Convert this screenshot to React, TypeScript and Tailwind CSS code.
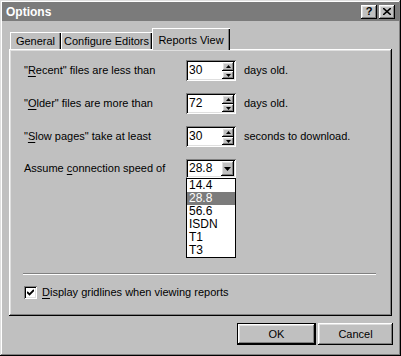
import React from 'react';

const raised =
  'bg-[#c0c0c0] shadow-[inset_-1px_-1px_0_#000,inset_1px_1px_0_#fff,inset_-2px_-2px_0_#808080,inset_2px_2px_0_#dfdfdf]';
const sunken =
  'bg-white shadow-[inset_1px_1px_0_#808080,inset_-1px_-1px_0_#fff,inset_2px_2px_0_#000,inset_-2px_-2px_0_#dfdfdf]';

function Tri({ up }: { up?: boolean }) {
  return (
    <svg width="5" height="3" viewBox="0 0 5 3" className="block">
      <polygon points={up ? '2.5,0 5,3 0,3' : '0,0 5,0 2.5,3'} fill="#000" />
    </svg>
  );
}

function SpinBox({ value }: { value: string }) {
  return (
    <div className={`flex h-[21px] w-[50px] p-[2px] ${sunken}`}>
      <div className="flex-1 pl-[1px] text-[12px] leading-[17px]">{value}</div>
      <div className="flex w-[12px] flex-col">
        <div className={`flex h-[9px] items-center justify-center ${raised}`}>
          <Tri up />
        </div>
        <div className={`flex h-[8px] items-center justify-center ${raised}`}>
          <Tri />
        </div>
      </div>
    </div>
  );
}

function Key({ children }: { children: React.ReactNode }) {
  return <span className="underline underline-offset-[2px]">{children}</span>;
}

const speeds = ['14.4', '28.8', '56.6', 'ISDN', 'T1', 'T3'];

export default function App() {
  return (
    <div
      className="flex h-[356px] w-[401px] flex-col bg-[#c0c0c0] p-[2px] text-[11px] text-black shadow-[inset_-1px_-1px_0_#000,inset_1px_1px_0_#dfdfdf,inset_-2px_-2px_0_#808080,inset_2px_2px_0_#fff]"
      style={{ fontFamily: '"Liberation Sans", Arial, sans-serif' }}
    >
      {/* title bar */}
      <div className="flex h-[19px] items-center bg-[#7b7b7b] pl-[4px] pr-[4px]">
        <span className="flex-1 text-[12px] font-bold text-white">Options</span>
        <div className="flex gap-[2px]">
          <div className={`flex h-[14px] w-[16px] items-center justify-center text-[11px] font-bold leading-none ${raised}`}>
            ?
          </div>
          <div className={`flex h-[14px] w-[16px] items-center justify-center ${raised}`}>
            <svg width="8" height="7" viewBox="0 0 8 7">
              <path d="M0 0 L8 7 M8 0 L0 7" stroke="#000" strokeWidth="1.6" />
            </svg>
          </div>
        </div>
      </div>

      {/* tabs */}
      <div className="mt-[8px] flex h-[20px] items-end whitespace-nowrap pl-[8px]">
        <div className="flex h-[17px] w-[51px] items-center justify-center pt-[1px] shadow-[inset_1px_1px_0_#fff,inset_-1px_0_0_#000,inset_-2px_0_0_#808080]">
          General
        </div>
        <div className="flex h-[17px] w-[91px] items-center justify-center pt-[1px] shadow-[inset_1px_1px_0_#fff,inset_-1px_0_0_#000,inset_-2px_0_0_#808080]">
          Configure Editors
        </div>
        <div className="relative z-10 -mb-[1px] flex h-[22px] w-[78px] items-start justify-center bg-[#c0c0c0] pt-[4px] shadow-[inset_1px_1px_0_#fff,inset_-1px_0_0_#000,inset_-2px_0_0_#808080]">
          Reports View
        </div>
      </div>

      {/* panel */}
      <div className="mx-[7px] flex h-[267px] flex-col whitespace-nowrap pl-[15px] pt-[11px] shadow-[inset_-1px_-1px_0_#000,inset_1px_1px_0_#fff,inset_-2px_-2px_0_#808080,inset_2px_2px_0_#dfdfdf]">
        <div className="flex h-[21px] items-center">
          <span className="w-[162px]">
            "<Key>R</Key>ecent" files are less than
          </span>
          <SpinBox value="30" />
          <span className="ml-[8px]">days old.</span>
        </div>
        <div className="mt-[12px] flex h-[21px] items-center">
          <span className="w-[162px]">
            "<Key>O</Key>lder" files are more than
          </span>
          <SpinBox value="72" />
          <span className="ml-[8px]">days old.</span>
        </div>
        <div className="mt-[12px] flex h-[21px] items-center">
          <span className="w-[162px]">
            "<Key>S</Key>low pages" take at least
          </span>
          <SpinBox value="30" />
          <span className="ml-[8px]">seconds to download.</span>
        </div>
        <div className="mt-[12px] flex h-[19px] items-center">
          <span className="w-[162px]">
            Assume <Key>c</Key>onnection speed of
          </span>
          <div className="relative">
            <div className={`flex h-[19px] w-[50px] p-[2px] ${sunken}`}>
              <div className="flex-1 pl-[1px] text-[12px] leading-[15px]">28.8</div>
              <div className={`flex w-[13px] items-center justify-center ${raised}`}>
                <svg width="7" height="4" viewBox="0 0 7 4">
                  <polygon points="0,0 7,0 3.5,4" fill="#000" />
                </svg>
              </div>
            </div>
            <div className="absolute left-0 top-full z-20 w-[50px] border border-black bg-white">
              {speeds.map((s) => (
                <div
                  key={s}
                  className={`h-[13px] pl-[2px] text-[12px] leading-[13px] ${
                    s === '28.8' ? 'bg-[#7b7b7b] text-white' : ''
                  }`}
                >
                  {s}
                </div>
              ))}
            </div>
          </div>
        </div>

        <div className="mt-auto mb-[17px]">
          <div className="-ml-[1px] mr-[16px] h-[2px] border-t border-b border-t-[#808080] border-b-white" />
          <div className="mt-[11px] flex h-[13px] items-center">
            <div className={`flex h-[13px] w-[13px] items-center justify-center ${sunken}`}>
              <svg width="7" height="7" viewBox="0 0 7 7">
                <path d="M0 3 L2.5 5.5 L7 1" stroke="#000" strokeWidth="1.8" fill="none" />
              </svg>
            </div>
            <span className="ml-[5px]">
              <Key>D</Key>isplay gridlines when viewing reports
            </span>
          </div>
        </div>
      </div>

      {/* buttons */}
      <div className="mt-[7px] flex justify-end gap-[2px] pr-[6px]">
        <div className="h-[22px] w-[79px] border border-black">
          <div className={`flex h-full w-full items-center justify-center ${raised}`}>OK</div>
        </div>
        <div className={`flex h-[22px] w-[75px] items-center justify-center ${raised}`}>Cancel</div>
      </div>
    </div>
  );
}
